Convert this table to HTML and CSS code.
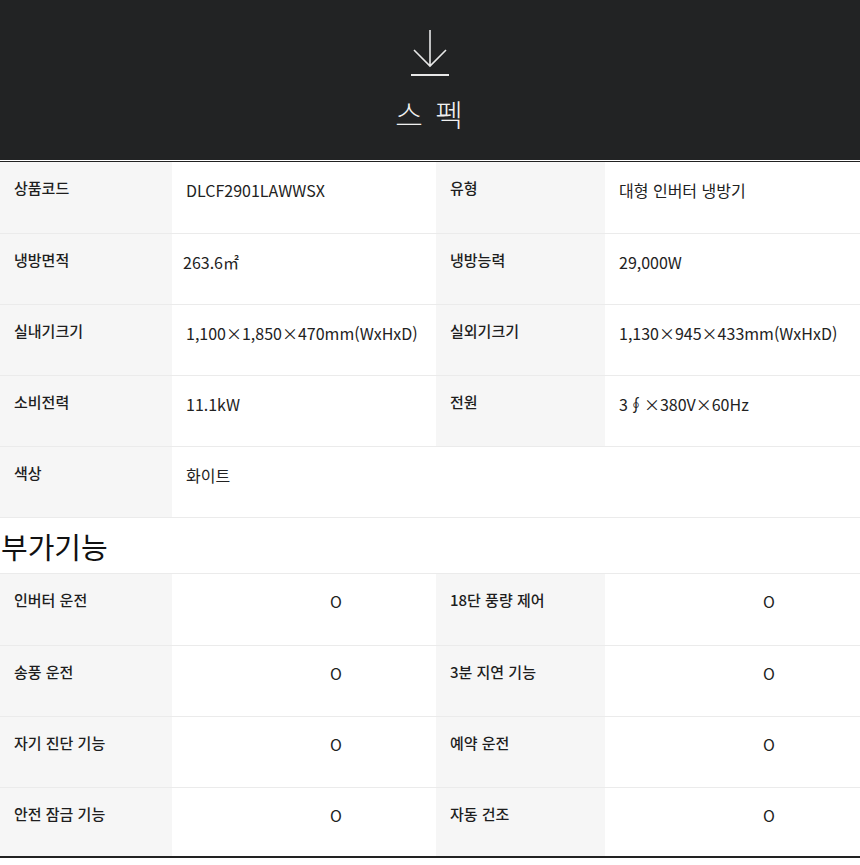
FILE: index.html
```html
<!DOCTYPE html>
<html lang="ko">
<head>
<meta charset="utf-8">
<link rel="stylesheet" href="styles.css">
</head>
<body>
<header class="hero">
  <svg class="arrow" width="40" height="50" viewBox="0 0 40 50">
    <path d="M20 2 V38 M4 22 L20 38 L36 22" fill="none" stroke="#e8e8e8" stroke-width="1.6"/>
    <path d="M1 47 H39" stroke="#e8e8e8" stroke-width="2"/>
  </svg>
  <h1 class="hero-title">스 펙</h1>
</header>
<div class="rule"></div>
<table class="spec">
  <colgroup><col class="c1"><col class="c2"><col class="c3"><col class="c4"></colgroup>
  <tr><th>상품코드</th><td>DLCF2901LAWWSX</td><th>유형</th><td>대형 인버터 냉방기</td></tr>
  <tr><th>냉방면적</th><td class="tight">263.6㎡</td><th>냉방능력</th><td>29,000W</td></tr>
  <tr><th>실내기크기</th><td>1,100×1,850×470mm(WxHxD)</td><th>실외기크기</th><td>1,130×945×433mm(WxHxD)</td></tr>
  <tr><th>소비전력</th><td>11.1kW</td><th>전원</th><td>3∮×380V×60Hz</td></tr>
  <tr><th>색상</th><td>화이트</td><td class="blank"></td><td class="blank"></td></tr>
</table>
<h2 class="sub">부가기능</h2>
<table class="spec feat">
  <colgroup><col class="c1"><col class="c2"><col class="c3"><col class="c4"></colgroup>
  <tr><th>인버터 운전</th><td>O</td><th>18단 풍량 제어</th><td>O</td></tr>
  <tr><th>송풍 운전</th><td>O</td><th>3분 지연 기능</th><td>O</td></tr>
  <tr><th>자기 진단 기능</th><td>O</td><th>예약 운전</th><td>O</td></tr>
  <tr class="last"><th>안전 잠금 기능</th><td>O</td><th>자동 건조</th><td>O</td></tr>
</table>
</body>
</html>
```

FILE: styles.css
```css
html, body {
  margin: 0;
  padding: 0;
  background: #fff;
}
body {
  width: 860px;
  font-family: "Noto Sans CJK KR", "Noto Sans", sans-serif;
  color: #222;
}
.hero {
  background: #222324;
  height: 160px;
  display: flex;
  flex-direction: column;
  align-items: center;
}
.arrow {
  display: block;
  margin-top: 28px;
}
.hero-title {
  margin: 17px 0 0 0;
  font-size: 30px;
  font-weight: 300;
  line-height: 36px;
  color: #f0f0f0;
  letter-spacing: 2px;
}
.rule {
  height: 1px;
  margin-top: 1px;
  background: #222;
}
.spec {
  width: 860px;
  border-collapse: collapse;
  table-layout: fixed;
}
.c1 { width: 172px; }
.c2 { width: 264px; }
.c3 { width: 169px; }
.c4 { width: 255px; }
.spec tr {
  height: 71px;
}
.spec tr + tr th,
.spec tr + tr td {
  border-top: 1px solid #ebebeb;
}
.spec th {
  background: #f6f6f6;
  text-align: left;
  vertical-align: top;
  font-weight: 500;
  font-size: 15px;
  line-height: 22px;
  padding: 15px 0 0 14px;
  color: #1e1e1e;
}
.spec td {
  vertical-align: top;
  font-size: 16px;
  line-height: 22px;
  padding: 17px 0 0 14px;
  color: #222;
  white-space: nowrap;
}
.spec td.tight {
  padding-left: 11px;
}
.spec td.blank {
  background: #fff;
}
.sub {
  margin: 0;
  height: 57px;
  font-size: 29px;
  font-weight: 400;
  line-height: 56px;
  padding-left: 1px;
  color: #111;
  border-bottom: 1px solid #ebebeb;
  box-sizing: border-box;
  border-top: 1px solid #ebebeb;
}
.feat td {
  padding-left: 158px;
  padding-top: 16px;
}
.feat tr.last th,
.feat tr.last td {
  border-bottom: 2px solid #222;
}
.feat tr.last {
  height: 70px;
}
```
